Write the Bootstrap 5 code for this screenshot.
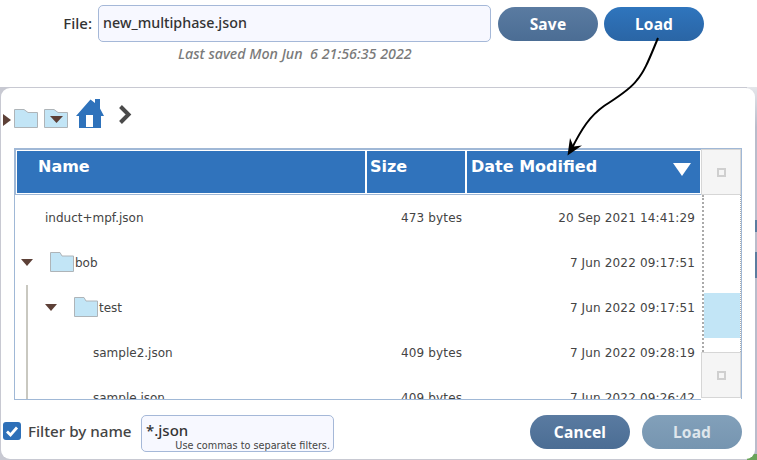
<!DOCTYPE html>
<html lang="en">
<head>
<meta charset="utf-8">
<title>File dialog</title>
<link href="https://cdn.jsdelivr.net/npm/bootstrap@5.3.0/dist/css/bootstrap.min.css" rel="stylesheet">
<style>
html,body{height:460px;overflow:hidden;background:#fff;}
body{font-family:"Noto Sans","Open Sans",sans-serif;color:#333;position:relative;}
.top-area{height:87px;padding-top:5px;}
.file-row{height:37px;}
.file-lbl{width:98px;padding-right:6px;text-align:right;font-size:15px;font-weight:500;line-height:37px;}
.fld{background:#f7f8ff;border:1px solid #a5b8d8;border-radius:5px;color:#333;}
.file-fld{width:393px;height:37px;font-size:14.3px;padding:5px 4px 3px;line-height:24px;font-weight:500;}
.pill{width:100px;height:34px;border-radius:17px;border:0;color:#fff;font-weight:700;font-size:15.5px;letter-spacing:.2px;line-height:32px;text-align:center;padding:0;flex:none;}
.pill-muted{background:linear-gradient(#5a7ba1,#4b6d94);}
.pill-blue{background:linear-gradient(#2f75bd,#2a65a5);}
.pill-off{background:linear-gradient(#82a0ba,#7695b0);color:#dfe6ec;}
.save-gap{margin-left:7px;margin-top:2px;}
.load-gap{margin-left:6px;margin-top:2px;}
.saved{font-style:italic;font-size:14.3px;color:#7a7a7a;font-weight:500;line-height:18px;margin-left:178px;margin-top:3px;white-space:pre;}
.dlg-back{height:373px;padding:1px 2px 1px 1px;background:linear-gradient(#e4e6ea 0,#b9bccb 40px,#b9bccb 133px,#5b7c9f 133px,#5b7c9f 145px,#b9bccb 145px,#b9bccb 165px,#5b7c9f 165px,#5b7c9f 191px,#b9bccb 191px,#b9bccb 367px,#6aa35a 367px) right/10px 100% no-repeat,#c8c9d2;}
.dlg{height:371px;background:#fff;border-radius:9px;}
.crumbs{height:60px;padding-left:2px;padding-top:8px;}
.tbl-wrap{margin-left:13px;width:728px;height:252px;}
.tbl-main{width:687px;height:252px;flex:none;}
.thead-row{height:47px;background:#fff;padding:1px 2px 1px 1px;border:solid #a0b8d6;border-width:2px 0 1px 2px;}
.hcell{background:#3073bc;color:#fff;font-family:"DejaVu Sans",sans-serif;font-weight:700;font-size:16px;height:42px;line-height:32px;position:relative;white-space:nowrap;flex:none;}
.h-name{width:348px;padding-left:21px;margin-right:2px;}
.h-size{width:98px;padding-left:3px;margin-right:2px;}
.h-date{width:233px;padding-left:4px;}
.sort-tri{position:absolute;right:9px;top:12px;width:18px;height:13px;}
.tbody-box{height:205px;overflow:hidden;position:relative;border:solid #a0b8d6;border-width:0 0 1px 1px;}
.trow{height:45px;font-family:"DejaVu Sans",sans-serif;font-size:12px;letter-spacing:.15px;color:#444;line-height:46px;white-space:nowrap;}
.c-name{width:350px;display:flex;align-items:center;flex:none;letter-spacing:0;padding-top:1px;}
.c-size{width:97px;padding-left:36px;flex:none;}
.c-date{width:233px;text-align:right;flex:none;}
.ps-name0{padding-left:30px;}
.ps-dir1{padding-left:24px;}
.ps-file1{padding-left:78px;}
.dir-ic{flex:none;margin-top:-1px;}
.sb{width:41px;height:251px;flex:none;border:solid #a0b8d6;border-width:1px 1px 0 0;}
.sb-btn{height:46px;background:#f5f5f5;border:1px solid #d6d6d6;display:flex;align-items:center;justify-content:center;}
.sb-btn i{display:block;width:9px;height:9px;border:2px solid #cfcfcf;}
.sb-track{height:157px;border:dotted #aaa;border-width:0 1px 0 2px;background:#fff;padding-top:98px;margin:0 0 0 1px;}
.sb-thumb{height:45px;background:#c2e5f6;}
.tree-line{position:absolute;left:11px;top:90px;bottom:0;width:2px;background:#c9c8c0;}
.foot{height:43px;padding:15px 13px 0 2px;}
.chk{width:18px;height:18px;background:#2e70b8;border-radius:3px;flex:none;margin-top:7px;}
.chk-lbl{font-size:15.2px;font-weight:500;margin-left:7px;width:103px;line-height:32px;color:#444;white-space:nowrap;flex:none;}
.filter-fld{width:193px;height:37px;margin-left:10px;position:relative;font-size:15px;padding:2px 4px;line-height:24px;font-weight:500;flex:none;}
.filter-hint{position:absolute;right:3px;bottom:-1px;font-size:9.700px;font-family:"DejaVu Sans",sans-serif;font-weight:400;line-height:12px;color:#444;white-space:nowrap;}
.off-btn{margin-left:12px;}
.arrow-ov{position:absolute;left:0;top:0;pointer-events:none;}
</style>
</head>
<body>
<div class="top-area">
  <div class="d-flex file-row">
    <div class="file-lbl">File:</div>
    <div class="fld file-fld">new_multiphase.json</div>
    <button class="pill pill-muted save-gap" type="button">Save</button>
    <button class="pill pill-blue load-gap" type="button">Load</button>
  </div>
  <div class="saved">Last saved Mon Jun  6 21:56:35 2022</div>
</div>
<div class="dlg-back">
<div class="dlg">
  <div class="crumbs d-flex align-items-start">
    <svg width="135" height="36" viewBox="3 96 135 36">
      <path d="M3 114 L11 120 L3 126 Z" fill="#5d4037"/>
      <path d="M14.500 127.500V109.500H24L28 112.500H37.500V127.500Z" fill="#c2e5f6" stroke="#aeb4b8"/>
      <path d="M44.500 127.500V109.500H54L58 112.500H67.500V127.500Z" fill="#c2e5f6" stroke="#aeb4b8"/>
      <path d="M50 116H63L56.500 123Z" fill="#5d4037"/>
      <path d="M76 116 L90.500 99.500 L95 103V99H100V108.500L104 116H101V128H79V116Z" fill="#2e72bb"/>
      <rect x="86" y="115" width="7" height="12" fill="#fff"/>
      <path d="M120.500 106.500 L128.500 114.500 L120.500 122.500" fill="none" stroke="#4a4a4a" stroke-width="4"/>
    </svg>
  </div>
  <div class="tbl-wrap d-flex">
    <div class="tbl-main">
      <div class="thead-row d-flex">
        <div class="hcell h-name">Name</div>
        <div class="hcell h-size">Size</div>
        <div class="hcell h-date">Date Modified
          <svg class="sort-tri" viewBox="0 0 18 13"><path d="M0 0H18L9 13Z" fill="#fff"/></svg>
        </div>
      </div>
      <div class="tbody-box">
        <div class="tree-line"></div>
        <div class="trow d-flex"><div class="c-name ps-name0">induct+mpf.json</div><div class="c-size">473 bytes</div><div class="c-date">20 Sep 2021 14:41:29</div></div>
        <div class="trow d-flex"><div class="c-name"><svg width="60" height="22" viewBox="0 0 60 22" class="dir-ic"><path d="M6 7H18L12 14Z" fill="#5d4037"/><path d="M35.500 19.500V.5H45L47 4H58.500V19.500Z" fill="#c2e5f6" stroke="#aeb4b8"/></svg><span>bob</span></div><div class="c-size"></div><div class="c-date">7 Jun 2022 09:17:51</div></div>
        <div class="trow d-flex"><div class="c-name ps-dir1"><svg width="60" height="22" viewBox="0 0 60 22" class="dir-ic"><path d="M6 7H18L12 14Z" fill="#5d4037"/><path d="M35.500 19.500V.5H45L47 4H58.500V19.500Z" fill="#c2e5f6" stroke="#aeb4b8"/></svg><span>test</span></div><div class="c-size"></div><div class="c-date">7 Jun 2022 09:17:51</div></div>
        <div class="trow d-flex"><div class="c-name ps-file1">sample2.json</div><div class="c-size">409 bytes</div><div class="c-date">7 Jun 2022 09:28:19</div></div>
        <div class="trow d-flex"><div class="c-name ps-file1">sample.json</div><div class="c-size">409 bytes</div><div class="c-date">7 Jun 2022 09:26:42</div></div>
      </div>
    </div>
    <div class="sb">
      <div class="sb-btn"><i></i></div>
      <div class="sb-track"><div class="sb-thumb"></div></div>
      <div class="sb-btn"><i></i></div>
    </div>
  </div>
  <div class="foot d-flex align-items-start">
    <div class="chk"><svg class="d-block" width="18" height="18" viewBox="0 0 18 18"><path d="M4 9.500L7.500 13L14 5.500" fill="none" stroke="#fff" stroke-width="2.800"/></svg></div>
    <div class="chk-lbl">Filter by name</div>
    <div class="fld filter-fld">*.json<div class="filter-hint">Use commas to separate filters.</div></div>
    <button class="pill pill-muted ms-auto" type="button">Cancel</button>
    <button class="pill pill-off off-btn" type="button">Load</button>
  </div>
</div>
</div>
<svg class="arrow-ov" width="757" height="460" viewBox="0 0 757 460">
  <path d="M658 38 C650 57 645 71 637 80 C630 90 613 100 604 106 C590 116 582 128 571 150" fill="none" stroke="#000" stroke-width="2"/>
  <path d="M567.500 155.500 L570 138 L573.500 146.500 L582 145.500 Z" fill="#000"/>
</svg>
<script src="https://cdn.jsdelivr.net/npm/bootstrap@5.3.0/dist/js/bootstrap.bundle.min.js"></script>
</body>
</html>
